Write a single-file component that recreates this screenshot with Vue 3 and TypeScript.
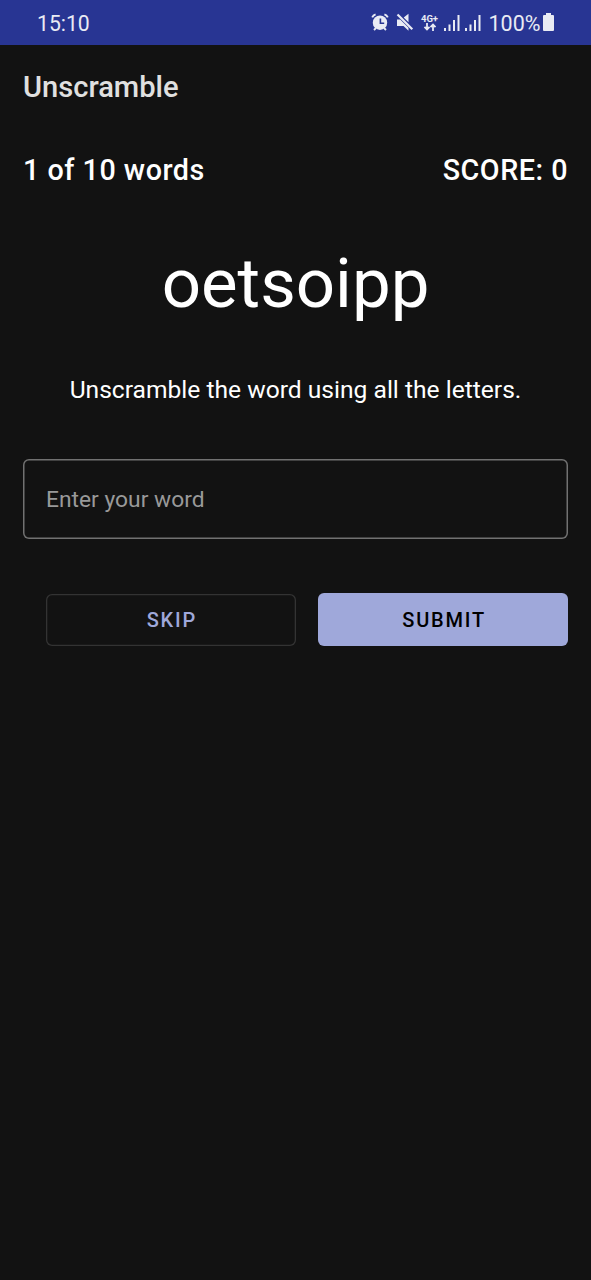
<script setup lang="ts">
import { ref } from 'vue'

const guess = ref('')
const scrambledWord = 'oetsoipp'
const signals = [0, 1]
</script>

<template>
  <main class="screen">
    <header class="status">
      <span class="time">15:10</span>
      <div class="indicators">
        <svg class="alarm" width="18" height="18" viewBox="0 0 18 18">
          <circle cx="9" cy="9.7" r="7.2" fill="currentColor" />
          <path d="M1.2 4.4Q2.2 2.2 4.6 1.4M13.4 1.4Q15.8 2.2 16.8 4.4M3 17l2-2M15 17l-2-2" fill="none" stroke="currentColor" stroke-width="1.9" />
          <path d="M9.4 5.4v4.9h3.8" fill="none" stroke="#283593" stroke-width="1.6" />
        </svg>
        <svg class="mute" width="18" height="18" viewBox="0 0 18 18">
          <path d="M1 6.5h3.2l8.3 8.3v2.9L7.5 13H1zM7.7 4.5 12.5.8v8.4z" fill="currentColor" />
          <path d="m1.5 1.5 14.8 14.8" stroke="currentColor" stroke-width="2.2" />
        </svg>
        <div class="network">
          <span>4G+</span>
          <svg width="14" height="8" viewBox="0 0 14 8"><path d="M4 0v6M1.5 3.8 4 6.5 6.5 3.8M10 8V2M7.5 4.2 10 1.5 12.5 4.2" fill="none" stroke="currentColor" stroke-width="1.8" /></svg>
        </div>
        <svg v-for="signal in signals" :key="signal" class="signal" width="16" height="16" viewBox="0 0 16 16">
          <path d="M1 13V16M5.5 9.5V16M10 5V16M14.5 0V16" stroke="currentColor" stroke-width="2" />
        </svg>
        <span class="percent">100%</span>
        <svg class="battery" width="11" height="18" viewBox="0 0 11 18"><path d="M3 0h5v2h2q1 0 1 1v14q0 1-1 1H1q-1 0-1-1V3q0-1 1-1h2z" fill="currentColor" /></svg>
      </div>
    </header>
    <h1>Unscramble</h1>
    <section class="progress"><span>1 of 10 words</span><span class="score">SCORE: 0</span></section>
    <section class="word"><span>{{ scrambledWord }}</span></section>
    <p><span>Unscramble the word using all the letters.</span></p>
    <input v-model="guess" placeholder="Enter your word" aria-label="Enter your word" />
    <section class="actions"><button class="skip"><span>SKIP</span></button><button class="submit"><span>SUBMIT</span></button></section>
  </main>
</template>

<style>
html, body { margin: 0; background: #121212; }
</style>
<style scoped>
* { box-sizing: border-box; }
.screen { height: 1280px; background: #121212; color: #fff; font-family: Roboto, sans-serif; overflow: hidden; }
.status { height: 45px; padding: 1px 37px 0; background: #283593; color: #e9ebf4; display: flex; align-items: center; justify-content: space-between; font-size: 21.5px; }
.time { font-size: 21.2px; }
.indicators { display: flex; align-items: center; }
.alarm, .mute { margin-bottom: 2px; }
.mute { margin-left: 7px; }
.network { width: 18px; margin-left: 7px; margin-bottom: 1px; font-size: 9.5px; line-height: 9px; font-weight: 700; display: flex; flex-direction: column; align-items: center; }
.signal { margin-left: 5px; }
.percent { margin-left: 8px; }
.battery { margin-left: 2.5px; margin-bottom: 2px; }
h1 { margin: 0; padding: 25px 23px 0; height: 97px; font-size: 29.1px; line-height: 34px; font-weight: 500; color: #e0e0e0; }
.progress { display: flex; justify-content: space-between; padding: 11px 23px 0; height: 88px; font-size: 28.7px; line-height: 34px; font-weight: 500; letter-spacing: 0.52px; }
.word { height: 106px; padding-top: 1px; text-align: center; font-size: 69px; line-height: 106px; }
p { margin: 0; height: 123px; padding-top: 37px; text-align: center; font-size: 24.6px; line-height: 34px; }
input { display: block; width: 545px; height: 80px; margin: 0 0 0 23px; padding: 0 23px; border: 0; border-radius: 6px; box-shadow: inset 0 0 0 1.5px #717171; background: transparent; color: #fff; font: 22.8px Roboto, sans-serif; outline: none; }
input::placeholder { color: #999; opacity: 1; }
.actions { display: flex; gap: 22.5px; padding: 54px 23px 0 46px; }
button { flex: 1 1 0; height: 53px; padding: 1px 0 0; border: 0; border-radius: 6px; font: 500 20px Roboto, sans-serif; letter-spacing: 1.8px; }
button span { padding-left: 2px; }
.skip { height: 52px; margin-top: 0.5px; box-shadow: inset 0 0 0 1.3px #333; color: #9fa8da; background: transparent; }
.submit { color: #000; background: #9fa8da; }
</style>
